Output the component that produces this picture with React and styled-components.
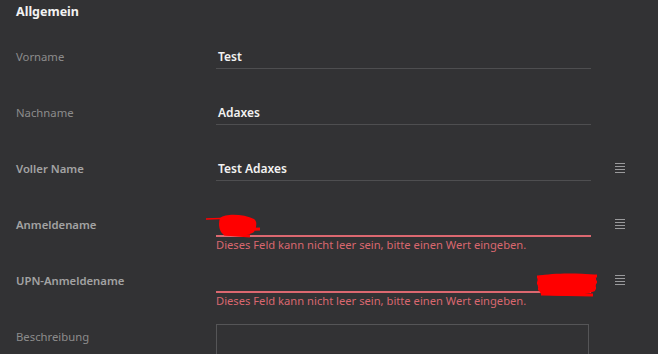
import React from "react";
import styled, { createGlobalStyle } from "styled-components";

const Global = createGlobalStyle`
  html, body { margin: 0; padding: 0; background: #323234; }
  body { font-family: "Noto Sans", "Open Sans", sans-serif; overflow: hidden; }
  #root { width: 658px; height: 354px; }
`;

const Page = styled.div`
  position: relative;
  width: 658px;
  height: 354px;
  background: #323234;
  overflow: hidden;
  padding-left: 16px;
  box-sizing: border-box;
`;

const Heading = styled.h2`
  margin: 0;
  height: 40px;
  padding-top: 3px;
  box-sizing: border-box;
  font-size: 12.5px;
  line-height: 18px;
  font-weight: 700;
  color: #f2f2f2;
`;

const Row = styled.div`
  display: grid;
  grid-template-columns: 200px 375px 24px 10px;
  height: 56px;
  align-items: start;
`;

const Label = styled.div`
  margin-top: 8px;
  font-size: 11.3px;
  line-height: 18px;
  color: ${(p) => (p.$strong ? "#a3a3a3" : "#8c8c8c")};
  font-weight: ${(p) => (p.$strong ? 600 : 400)};
`;

const FieldCol = styled.div`
  display: flex;
  flex-direction: column;
`;

const Input = styled.div`
  box-sizing: border-box;
  height: 29px;
  padding: 7px 0 0 2px;
  font-size: 12px;
  line-height: 20px;
  font-weight: 600;
  color: #f2f2f2;
  border-bottom: ${(p) => (p.$error ? "2px solid #dc6870" : "1px solid #4e4e50")};
`;

const Error = styled.div`
  font-size: 11.2px;
  line-height: 15px;
  color: #d9676f;
  white-space: nowrap;
`;

const TextArea = styled.div`
  margin-top: 4px;
  width: 373px;
  height: 60px;
  box-sizing: border-box;
  border: 1px solid #555557;
`;

const MenuIcon = styled.svg`
  grid-column: 4;
  margin-top: 11px;
  display: block;
`;

const Scribble = styled.svg`
  position: absolute;
  left: ${(p) => p.$x}px;
  top: ${(p) => p.$y}px;
  pointer-events: none;
`;

const Lines = () => (
  <MenuIcon width="10" height="10" viewBox="0 0 10 10">
    {[0.5, 3.5, 6.5, 9.5].map((y) => (
      <line key={y} x1="0" x2="10" y1={y} y2={y} stroke="#9a9a9c" strokeWidth="1" />
    ))}
  </MenuIcon>
);

const Field = ({ label, strong, value, error, icon }) => (
  <Row>
    <Label $strong={strong}>{label}</Label>
    <FieldCol>
      <Input $error={!!error}>{value}</Input>
      {error && <Error>{error}</Error>}
    </FieldCol>
    {icon && <Lines />}
  </Row>
);

const ERR = "Dieses Feld kann nicht leer sein, bitte einen Wert eingeben.";

export default function App() {
  return (
    <>
      <Global />
      <Page>
        <Heading>Allgemein</Heading>
        <Field label="Vorname" value="Test" />
        <Field label="Nachname" value="Adaxes" />
        <Field label="Voller Name" strong value="Test Adaxes" icon />
        <Field label="Anmeldename" strong value="" error={ERR} icon />
        <Field label="UPN-Anmeldename" strong value="" error={ERR} icon />
        <Row>
          <Label>Beschreibung</Label>
          <TextArea />
        </Row>
        <Scribble $x={204} $y={210} width="60" height="30" viewBox="0 0 60 30">
          <path d="M2 9 L30 8" stroke="#ff0000" strokeWidth="1.5" fill="none" />
          <path
            d="M16 8 C22 3 40 4 50 9 C54 12 52 18 50 22 C44 26 30 27 20 25 C15 22 14 14 16 8 Z"
            fill="#ff0000"
          />
          <path d="M18 10 L48 12 M17 15 L52 16 M18 20 L56 19 M20 24 L46 26" stroke="#ff0000" strokeWidth="3" fill="none" />
        </Scribble>
        <Scribble $x={535} $y={271} width="64" height="28" viewBox="0 0 64 28">
          <path
            d="M3 5 C18 2 42 2 60 4 C62 8 61 14 60 20 C50 25 25 26 6 23 C2 17 2 10 3 5 Z"
            fill="#ff0000"
          />
          <path d="M2 6 L62 5 M2 12 L62 11 M3 18 L61 17 M6 23 L58 24" stroke="#ff0000" strokeWidth="3" fill="none" />
        </Scribble>
      </Page>
    </>
  );
}
